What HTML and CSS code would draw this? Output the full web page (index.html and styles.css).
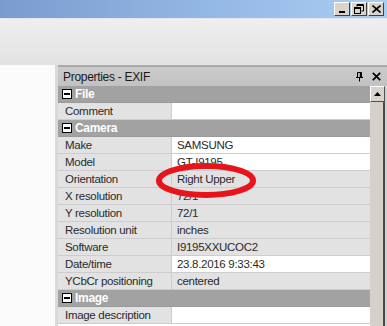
FILE: index.html
```html
<!DOCTYPE html>
<html>
<head>
    <title>Properties - EXIF</title>
    <meta charset="UTF-8">
    <link rel="stylesheet" href="styles.css">
</head>
<body>
    <div class="titlebar">
        <div class="winbtn"><span class="min-ico"></span></div>
        <div class="winbtn">
            <svg width="10" height="10" viewBox="0 0 10 10"><path d="M3 0.5h6.5v6.5h-2M3 0.5v2M3 1.5h6.5" fill="none" stroke="#000" stroke-width="1"/><rect x="0.5" y="3.5" width="6" height="6" fill="none" stroke="#000"/><path d="M0.5 4.5h6" stroke="#000"/></svg>
        </div>
        <div class="winbtn">
            <svg width="9" height="8" viewBox="0 0 9 8"><path d="M0.5 0.5L8.5 7.5M8.5 0.5L0.5 7.5" stroke="#000" stroke-width="1.6"/></svg>
        </div>
    </div>
    <div class="band band-top"></div>
    <div class="band band-low"></div>

    <div class="main">
        <div class="blank"></div>
        <div class="panel">
            <div class="panel-head">
                <span class="panel-title">Properties - EXIF</span>
                <svg class="pin" width="9" height="10" viewBox="0 0 9 10"><path d="M2.5 0.5h4v5h-4z M1 5.5h7 M4.5 5.5v4" fill="none" stroke="#000" stroke-width="1"/><path d="M5.5 0.5v5" stroke="#000" stroke-width="1.4"/></svg>
                <svg class="close" width="9" height="9" viewBox="0 0 9 9"><path d="M0.8 0.8L8.2 8.2M8.2 0.8L0.8 8.2" stroke="#000" stroke-width="1.7"/></svg>
            </div>
            <div class="panel-body">
                <div class="grid">
                    <div class="cat"><span class="box"></span>File</div>
                    <div class="row"><div class="name">Comment</div><div class="val edit"></div></div>
                    <div class="cat"><span class="box"></span>Camera</div>
                    <div class="row"><div class="name">Make</div><div class="val edit">SAMSUNG</div></div>
                    <div class="row"><div class="name">Model</div><div class="val edit">GT-I9195</div></div>
                    <div class="row"><div class="name">Orientation</div><div class="val">Right Upper</div></div>
                    <div class="row"><div class="name">X resolution</div><div class="val">72/1</div></div>
                    <div class="row"><div class="name">Y resolution</div><div class="val">72/1</div></div>
                    <div class="row"><div class="name">Resolution unit</div><div class="val">inches</div></div>
                    <div class="row"><div class="name">Software</div><div class="val">I9195XXUCOC2</div></div>
                    <div class="row"><div class="name">Date/time</div><div class="val edit">23.8.2016 9:33:43</div></div>
                    <div class="row"><div class="name">YCbCr positioning</div><div class="val">centered</div></div>
                    <div class="cat"><span class="box"></span>Image</div>
                    <div class="row"><div class="name">Image description</div><div class="val edit"></div></div>
                </div>
                <div class="scrollbar">
                    <div class="arrow">
                        <svg width="7" height="4" viewBox="0 0 7 4"><path d="M3.5 0L7 4H0z" fill="#000"/></svg>
                    </div>
                    <div class="track"></div>
                </div>
            </div>
        </div>
    </div>

    <!-- red marker drawn over the Orientation value -->
    <svg class="marker" width="112" height="44" viewBox="0 0 112 44">
        <ellipse cx="56" cy="22.5" rx="47" ry="14.5" fill="none" stroke="#e8141b" stroke-width="6"/>
    </svg>
</body>
</html>
```

FILE: styles.css
```css
body {
    margin: 0;
    width: 387px;
    height: 326px;
    overflow: hidden;
    position: relative;
    font-family: "Liberation Sans", Arial, sans-serif;
    font-size: 11.5px;
    letter-spacing: -0.3px;
    background: #fff;
}
.titlebar {
    height: 18px;
    display: flex;
    justify-content: flex-end;
    align-items: flex-start;
    gap: 1px;
    padding: 2px 3px 0 0;
    box-sizing: border-box;
    background: linear-gradient(to right, #7a9bcf, #92b6e3 50%, #aacdf3);
}
.winbtn {
    width: 16px;
    height: 14px;
    box-sizing: border-box;
    background: #d8d4cc;
    border: 1px solid;
    border-color: #fff #404040 #404040 #fff;
    display: flex;
    align-items: center;
    justify-content: center;
}
.min-ico {
    width: 6px;
    height: 2px;
    background: #000;
    margin-top: 6px;
}
.band-top {
    height: 22px;
    background: linear-gradient(#efefef, #e8e8e8);
    border-top: 1px solid #e6e6e6;
}
.band-low {
    height: 24px;
    background: linear-gradient(#e9e9e9, #e2e2e2);
}
.main {
    display: flex;
    height: 261px;
}
.blank {
    width: 55px;
    background: #fbfbfb;
    border-right: 3px solid #d9d9d9;
}
.panel {
    flex: 1;
    display: flex;
    flex-direction: column;
    border-top: 2px solid #a8a8a8;
}
.panel-head {
    height: 19px;
    display: flex;
    align-items: center;
    background: linear-gradient(#cbcbcb, #c2c2c2);
    padding-left: 5px;
    padding-right: 6px;
    color: #1a1a1a;
}
.panel-title {
    flex: 1;
    font-size: 12px;
}
.pin {
    margin-right: 8px;
}
.panel-body {
    flex: 1;
    display: flex;
    overflow: hidden;
}
.grid {
    width: 312px;
}
.cat {
    height: 17px;
    background: #a2a2a2;
    color: #fff;
    font-weight: bold;
    font-size: 12px;
    display: flex;
    align-items: center;
    padding-left: 4px;
    border-bottom: 1px solid #9a9a9a;
    box-sizing: border-box;
}
.box {
    width: 8px;
    height: 8px;
    background: #fff;
    border: 1px solid #000;
    margin-right: 3px;
    position: relative;
}
.box::after {
    content: "";
    position: absolute;
    left: 1px;
    right: 1px;
    top: 3px;
    height: 2px;
    background: #000;
}
.row {
    height: 17px;
    display: flex;
    border-bottom: 1px solid #cdcdcd;
    box-sizing: border-box;
    color: #2a2a2a;
}
.name {
    width: 114px;
    background: #e2e2e2;
    border-right: 1px solid #cdcdcd;
    padding-left: 7px;
    box-sizing: border-box;
    line-height: 16px;
}
.val {
    flex: 1;
    background: #e2e2e2;
    padding-left: 5px;
    line-height: 16px;
}
.val.edit {
    background: #fff;
}
.scrollbar {
    width: 15px;
    display: flex;
    flex-direction: column;
    background: #d5d1ca;
    border-right: 2px solid #d0d0d0;
}
.arrow {
    height: 16px;
    box-sizing: border-box;
    border: 1px solid;
    border-color: #fff #505050 #505050 #fff;
    background: #d8d4cc;
    display: flex;
    align-items: center;
    justify-content: center;
}
.track {
    flex: 1;
    border-right: 2px solid #4a4a4a;
}
.marker {
    position: absolute;
    left: 150px;
    top: 158px;
}
```
